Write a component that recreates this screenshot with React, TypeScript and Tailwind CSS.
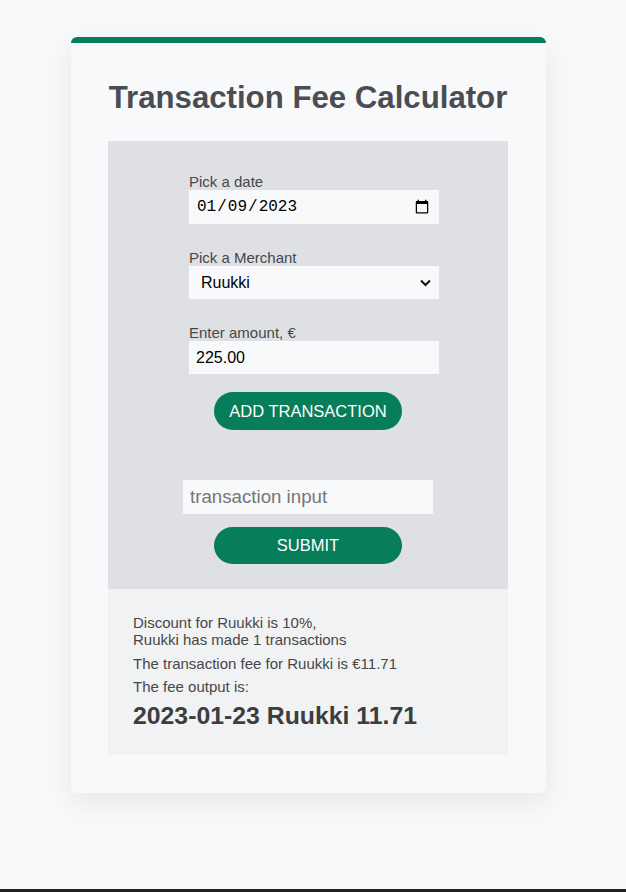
import React from "react";

export default function App() {
  const font = { fontFamily: '"Liberation Sans", Arial, sans-serif' };
  return (
    <div className="min-h-[892px] bg-[#f8f9fa] flex flex-col" style={font}>
      <div className="flex-1 pt-[37px]">
        <div className="ml-[71px] w-[475px] rounded-[6px] border-t-[6px] border-[#077d5a] bg-[#f8f9fa] pl-[37px] pr-[38px] pb-[38px] pt-[37px] shadow-[0_10px_30px_rgba(0,0,0,0.08)]">
          <h1 className="text-center text-[31.2px] font-bold leading-[36px] text-[#4a4d52]">
            Transaction Fee Calculator
          </h1>
          <div className="mt-[25px] bg-[#dee0e4] pt-[32px] pb-[25px] flex flex-col">
            <div className="ml-[81px] w-[250px] flex flex-col">
              <label className="text-[15px] leading-[17px] text-[#474747]">Pick a date</label>
              <input
                type="date"
                defaultValue="2023-01-09"
                className="h-[34px] w-[250px] bg-[#f8f9fa] px-[7px] text-[16px] text-black outline-none"
                style={{ fontFamily: '"Liberation Mono", monospace' }}
              />
              <label className="mt-[25px] text-[15px] leading-[17px] text-[#474747]">Pick a Merchant</label>
              <div className="relative h-[33px] w-[250px]">
                <select
                  defaultValue="Ruukki"
                  className="h-[33px] w-[250px] appearance-none bg-[#f8f9fa] pl-[12px] pr-[30px] text-[16px] text-black outline-none"
                >
                  <option>Ruukki</option>
                  <option>Other</option>
                </select>
                <svg
                  className="pointer-events-none absolute right-[8px] top-[13px]"
                  width="11"
                  height="8"
                  viewBox="0 0 11 8"
                >
                  <path d="M1 1.5 L5.5 6 L10 1.5" fill="none" stroke="#111" strokeWidth="2" />
                </svg>
              </div>
              <label className="mt-[25px] text-[15px] leading-[17px] text-[#474747]">Enter amount, €</label>
              <input
                type="text"
                defaultValue="225.00"
                className="h-[33px] w-[250px] bg-[#f8f9fa] px-[7px] text-[16px] text-black outline-none"
              />
            </div>
            <button className="mx-auto mt-[18px] h-[38px] w-[188px] rounded-full bg-[#077d5a] text-[16.5px] text-white">
              ADD TRANSACTION
            </button>
            <input
              type="text"
              placeholder="transaction input"
              className="ml-[75px] mt-[50px] h-[34px] w-[250px] bg-[#f8f9fa] px-[7px] text-[18.7px] text-black placeholder:text-[#767676] outline-none"
            />
            <button className="mx-auto mt-[13px] h-[37px] w-[188px] rounded-full bg-[#077d5a] text-[16.5px] text-white">
              SUBMIT
            </button>
          </div>
          <div className="bg-[#f1f2f4] px-[25px] pt-[25px] pb-[25px] text-[15px] leading-[17px] text-[#474747]">
            <p>
              Discount for Ruukki is 10%,
              <br />
              Ruukki has made 1 transactions
            </p>
            <p className="mt-[7px]">The transaction fee for Ruukki is €11.71</p>
            <p className="mt-[6px]">The fee output is:</p>
            <p className="mt-[7px] text-[24.8px] font-bold leading-[28px] text-[#3d3d3d]">
              2023-01-23 Ruukki 11.71
            </p>
          </div>
        </div>
      </div>
      <div className="h-[3px] bg-[#202020]" />
    </div>
  );
}
